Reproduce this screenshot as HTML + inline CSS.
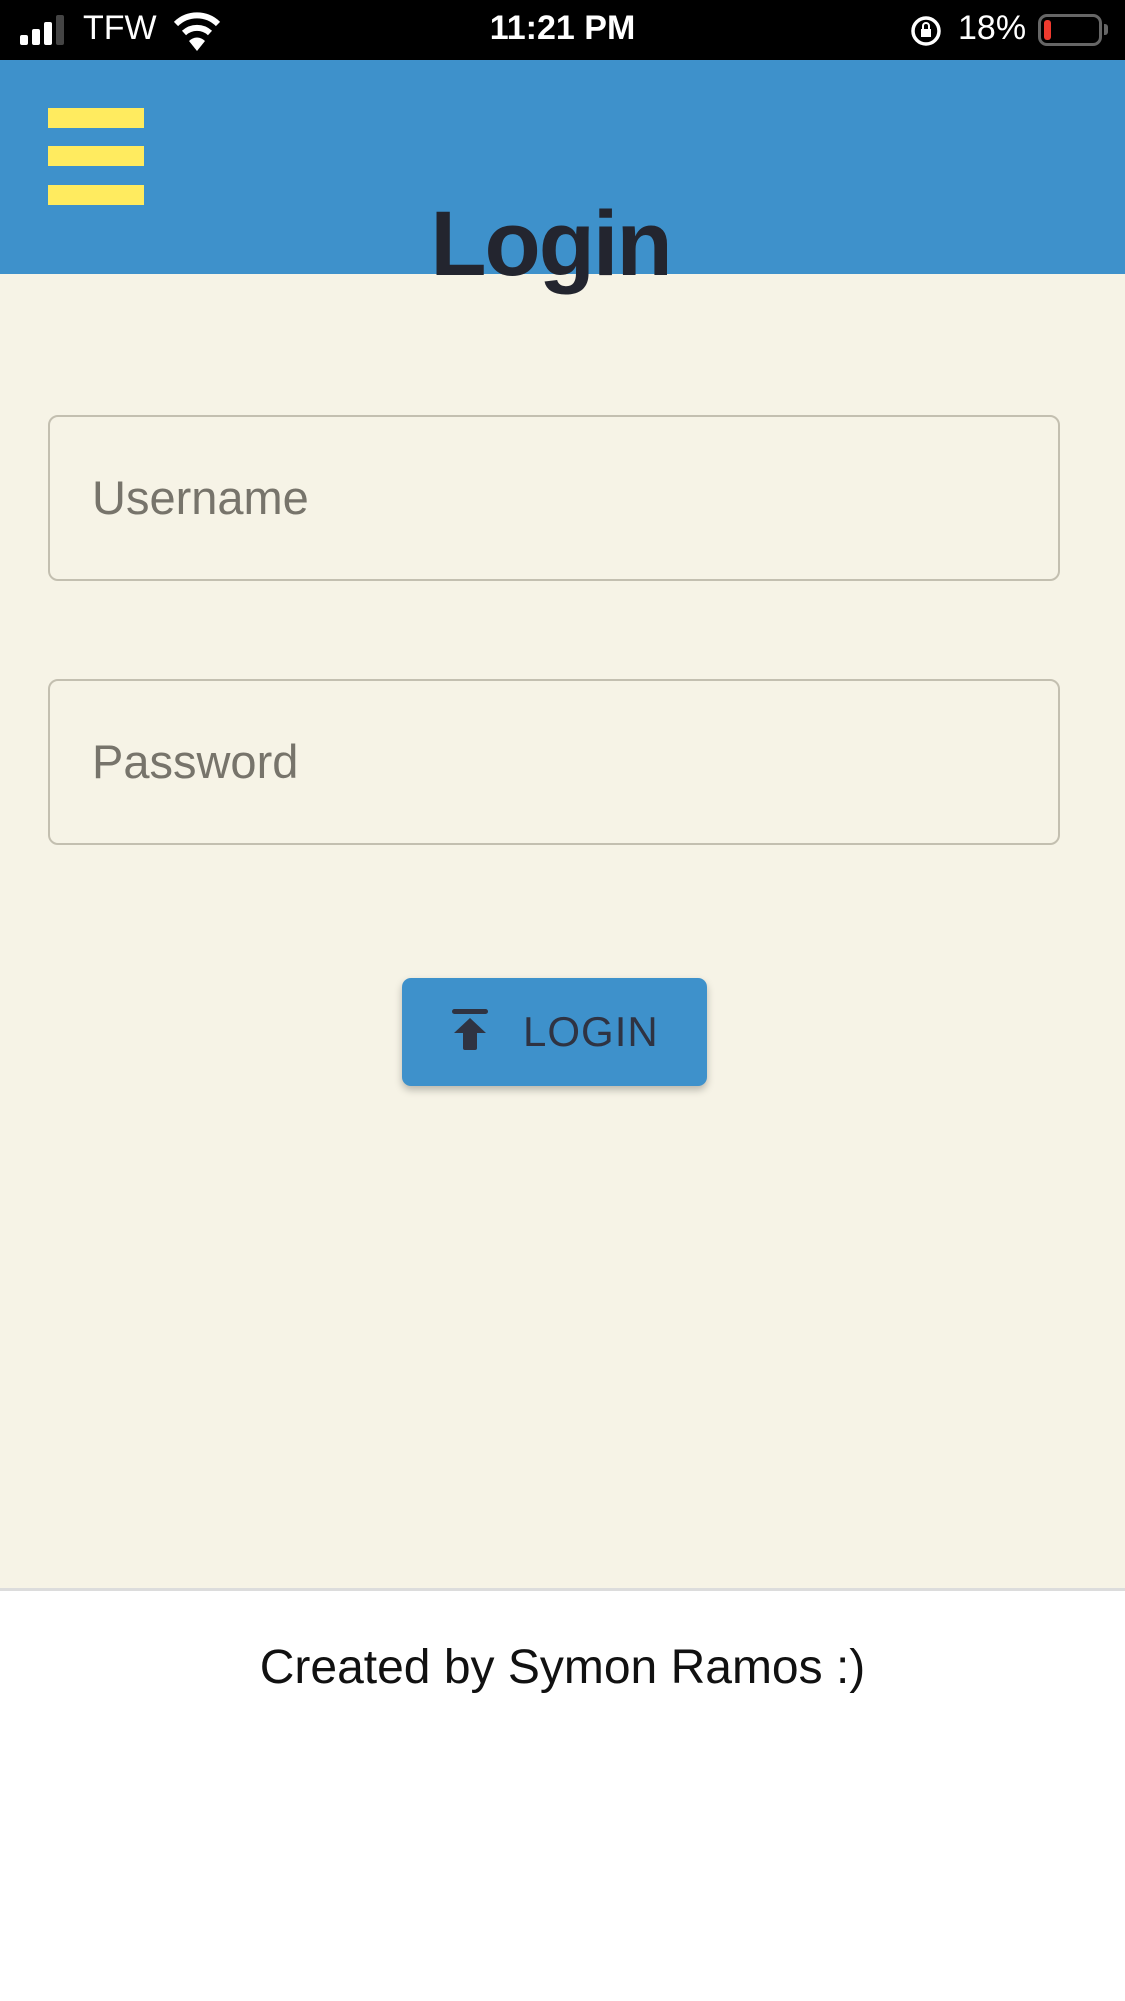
<!DOCTYPE html>
<html><head><meta charset="utf-8"><style>
*{margin:0;padding:0;box-sizing:border-box}
body{width:1125px;height:2001px;background:#fff;font-family:"Liberation Sans",sans-serif;position:relative;overflow:hidden}
.sb{position:absolute;left:0;top:0;width:1125px;height:60px;background:#000;color:#fff}
.hdr{position:absolute;left:0;top:60px;width:1125px;height:214px;background:#3e91cb}
.main{position:absolute;left:0;top:274px;width:1125px;height:1314px;background:#f6f3e6}
.bar{position:absolute;left:48px;width:96px;height:20px;background:#ffeb5f}
.title{position:absolute;left:-12px;width:1125px;text-align:center;top:192px;font-size:92px;font-weight:bold;color:#23252f;letter-spacing:-2px}
.inp{position:absolute;left:48px;width:1012px;height:166px;border:2px solid #c3bfb0;border-radius:10px;font-size:47px;color:#77746b;padding-left:42px;line-height:162px}
.btn{position:absolute;left:402px;top:978px;width:305px;height:108px;background:#3e91cb;border-radius:9px;box-shadow:0 4px 8px rgba(0,0,0,.25);color:#2f3342;font-size:42px;letter-spacing:1px}
.foot{position:absolute;left:0;top:1588px;width:1125px;height:3px;background:#dcdcdc}
.ft{position:absolute;left:0;width:1125px;top:1640px;text-align:center;font-size:48px;color:#111}
</style></head><body>
<div class="sb">
 <svg width="80" height="60" style="position:absolute;left:8px;top:0">
  <rect x="12" y="35" width="8" height="10" rx="2" fill="#fff"/><rect x="24" y="29" width="8" height="16" rx="2" fill="#fff"/><rect x="36" y="22" width="8" height="23" rx="2" fill="#fff"/><rect x="48" y="15" width="8" height="30" rx="2" fill="#444"/>
 </svg>
 <div style="position:absolute;left:83px;top:9px;font-size:34px">TFW</div>
 <svg width="50" height="50" style="position:absolute;left:172px;top:8px" viewBox="0 0 50 50">
  <path d="M4 16 A30 30 0 0 1 46 16" stroke="#fff" stroke-width="6" fill="none"/>
  <path d="M12 25 A19 19 0 0 1 38 25" stroke="#fff" stroke-width="6" fill="none"/>
  <path d="M17 33 L25 43 L33 33 A11 11 0 0 0 17 33Z" fill="#fff"/>
 </svg>
 <div style="position:absolute;left:0;width:1125px;text-align:center;top:9px;font-size:34px;font-weight:bold">11:21 PM</div>
 <svg width="34" height="34" style="position:absolute;left:910px;top:14px" viewBox="0 0 34 34"><circle cx="16" cy="17" r="13" stroke="#fff" stroke-width="3.5" fill="none"/><rect x="11" y="15" width="10" height="8" fill="#fff"/><path d="M13 15 v-3 a3 3 0 0 1 6 0 v3" stroke="#fff" stroke-width="2" fill="none"/></svg>
 <div style="position:absolute;left:958px;top:9px;font-size:34px">18%</div>
 <div style="position:absolute;left:1038px;top:14px;width:64px;height:32px;border:3px solid #666;border-radius:9px"><div style="position:absolute;left:3px;top:3px;width:7px;height:20px;background:#f03a2e;border-radius:3px"></div></div>
 <div style="position:absolute;left:1104px;top:24px;width:4px;height:11px;background:#666;border-radius:0 3px 3px 0"></div>
</div>
<div class="hdr">
 <div class="bar" style="top:48px"></div><div class="bar" style="top:86px"></div><div class="bar" style="top:125px"></div>
</div>
<div class="main">
 <div class="inp" style="top:141px">Username</div>
 <div class="inp" style="top:405px">Password</div>
</div>
<div class="title">Login</div>
<div class="btn">
 <svg width="40" height="44" style="position:absolute;left:48px;top:31px" viewBox="0 0 40 44"><rect x="2" y="0" width="36" height="5" rx="2.5" fill="#2f3342"/><path d="M20 9 L36 24 H27 V39 a2 2 0 0 1 -2 2 H15 a2 2 0 0 1 -2 -2 V24 H4 Z" fill="#2f3342"/></svg>
 <div style="position:absolute;left:121px;top:30px;line-height:48px">LOGIN</div>
</div>
<div class="foot"></div>
<div class="ft">Created by Symon Ramos :)</div>
</body></html>
